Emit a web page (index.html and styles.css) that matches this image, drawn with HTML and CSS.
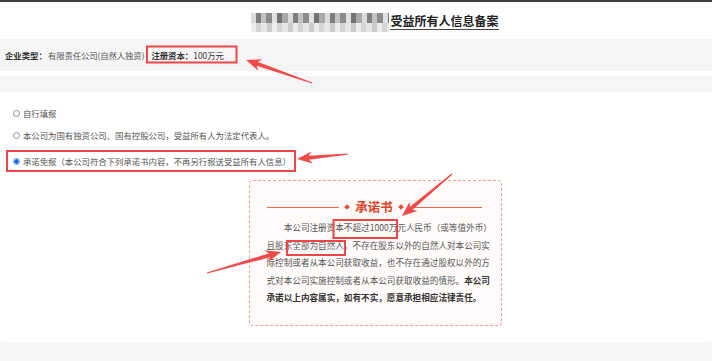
FILE: index.html
```html
<!DOCTYPE html>
<html lang="zh-CN">
<head>
<meta charset="utf-8">
<title>受益所有人信息备案</title>
<link rel="stylesheet" href="styles.css">
</head>
<body>
<div class="page">
  <div class="topline"></div>
  <header class="header">
    <div class="title">
      <div class="mosaic" aria-hidden="true"><div class="mosaic-r1"></div><div class="mosaic-r2"></div></div>
      <h1 class="title-text">受益所有人信息备案</h1>
    </div>
  </header>
  <section class="info">
    <span class="label">企业类型：</span><span class="value">有限责任公司(自然人独资)</span>
    <span class="label label-cap">注册资本：</span><span class="value value-dark">100万元</span>
  </section>
  <div class="strip"></div>
  <div class="spacer"></div>
  <main class="card">
    <div class="options">
      <div class="option"><span class="radio"></span><span>自行填报</span></div>
      <div class="option option-2"><span class="radio"></span><span>本公司为国有独资公司、国有控股公司，受益所有人为法定代表人。</span></div>
      <div class="option option-3"><span class="radio radio-on"></span><span>承诺免报（本公司符合下列承诺书内容，不再另行报送受益所有人信息）</span></div>
    </div>
    <div class="promise-wrap">
      <div class="promise">
        <div class="promise-title">
          <span class="pline"></span><span class="diamond"></span><span class="ptext">承诺书</span><span class="diamond"></span><span class="pline"></span>
        </div>
        <p class="promise-text"><span class="indent"></span>本公司注册资本不超过1000万元人民币（或等值外币）<br>且股东全部为自然人，不存在股东以外的自然人对本公司实<br>际控制或者从本公司获取收益，也不存在通过股权以外的方<br>式对本公司实施控制或者从本公司获取收益的情形。<b>本公司</b><br><b>承诺以上内容属实，如有不实，愿意承担相应法律责任。</b></p>
      </div>
    </div>
  </main>
  <div class="bottom"></div>

  <svg class="annot" width="712" height="361" viewBox="0 0 712 361" aria-hidden="true">
    <g fill="none" stroke="#ec4646" stroke-width="2">
      <rect x="147" y="46.5" width="89.5" height="16" />
      <rect x="7" y="151" width="288" height="20" />
      <rect x="333.5" y="220" width="63.5" height="18" />
      <rect x="287" y="241" width="58" height="14" />
    </g>
    <g fill="#f04a4a">
      <polygon points="312.3,82.4 258,62.1 262.1,59.3 246,60 258.2,70.6 256.7,65.8 311.9,83.6" />
      <polygon points="348,153.4 308.8,155.8 311.3,151.6 297,159 312.5,163.5 309.1,159.8 348.1,154.6" />
      <polygon points="451.6,173.6 409.9,206.8 409.6,201.8 402,216 417.4,211 412.5,209.8 452.4,174.4" />
      <polygon points="207.2,273.6 270,257.2 268.2,261.9 281,252 264.9,250.3 268.9,253.4 206.8,272.4" />
    </g>
  </svg>
</div>
</body>
</html>
```
FILE: styles.css
```css
* { box-sizing: border-box; }
html, body { margin: 0; padding: 0; }
body {
  background: #f5f5f5;
  font-family: "Noto Sans CJK SC", "Noto Sans", sans-serif;
  color: #555;
  width: 712px;
  height: 361px;
  overflow: hidden;
}
.page { position: relative; width: 712px; height: 361px; }
.topline { height: 2px; background: #3b3e39; }
.header {
  background: #fff;
  height: 37px;
  display: flex;
  justify-content: center;
  padding-left: 38px;
  padding-top: 11px;
}
.title { display: flex; align-items: flex-start; }
.mosaic { width: 138px; height: 19px; filter: blur(0.6px); margin-right: 1px; }
.mosaic-r1 {
  height: 10px;
  background: repeating-linear-gradient(90deg,
    #dadada 0 5px, #7e7e7e 5px 10px, #c2c2c2 10px 15px, #8c8c8c 15px 21px,
    #e2e2e2 21px 26px, #737373 26px 31px, #a8a8a8 31px 37px);
}
.mosaic-r2 {
  height: 9px;
  background: repeating-linear-gradient(90deg,
    #ececec 0 5px, #d4d4d4 5px 10px, #e6e6e6 10px 16px, #cbcbcb 16px 21px);
}
.title-text {
  margin: 0;
  font-size: 12px;
  line-height: 15px;
  font-weight: 700;
  color: #222;
  padding-bottom: 1px;
  border-bottom: 1px solid #444;
  letter-spacing: 0;
}
.info {
  height: 32px;
  display: flex;
  align-items: center;
  padding-left: 5px;
  font-size: 8.4px;
}
.label { font-weight: 700; color: #333; }
.value { margin-left: 1px; color: #555; letter-spacing: -0.1px; }
.label-cap { margin-left: 7px; }
.value-dark { margin-left: 0; color: #333; letter-spacing: 0; }
.strip { height: 5px; background: #fff; }
.spacer { height: 16px; }
.card {
  background: #fff;
  height: 250px;
  border-radius: 4px;
  padding-top: 15px;
}
.options { font-size: 8.4px; line-height: 12px; }
.option { display: flex; align-items: center; padding-left: 13px; height: 12px; }
.option-2 { margin-top: 10px; }
.option-3 { margin-top: 14px; }
.radio {
  width: 7px; height: 7px;
  border: 1px solid #8f8f8f;
  border-radius: 50%;
  background: #fff;
  margin-right: 3px;
  flex: none;
}
.radio-on {
  border-color: #5b8ff0;
  background: radial-gradient(circle, #1a66e0 0 2px, #cfe0fb 2.2px);
}
.promise-wrap { display: flex; justify-content: center; padding-left: 38px; margin-top: 13px; }
.promise {
  width: 253px;
  height: 146px;
  border: 1px dashed #f0a193;
  border-radius: 4px;
  background: #fffbfa;
  padding: 18px 19px 0 17px;
}
.promise-title { display: flex; align-items: center; height: 16px; }
.pline { flex: 1; height: 1px; background: #e9674f; }
.diamond { width: 4px; height: 4px; background: #e54c30; transform: rotate(45deg); margin: 0 6px; }
.ptext { font-size: 12.5px; font-weight: 700; color: #e0452a; line-height: 16px; }
.promise-text {
  margin: 4px 0 0;
  font-size: 8.6px;
  line-height: 17.5px;
  color: #555;
  white-space: nowrap;
}
.promise-text b { color: #333; font-weight: 700; }
.indent { display: inline-block; width: 17.2px; }
.annot { position: absolute; left: 0; top: 0; pointer-events: none; }
```
